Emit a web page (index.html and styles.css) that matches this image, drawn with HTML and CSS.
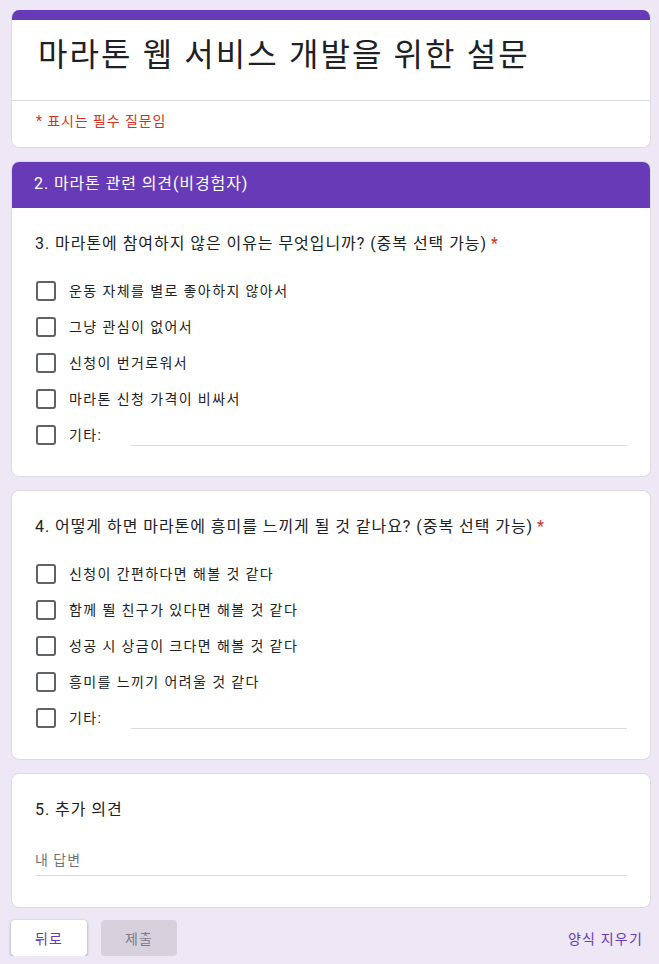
FILE: index.html
```html
<!DOCTYPE html>
<html lang="ko">
<head>
<meta charset="utf-8">
<title>마라톤 웹 서비스 개발을 위한 설문</title>
<link rel="stylesheet" href="styles.css">
</head>
<body>
<main class="form">
  <section class="card title-card">
    <div class="title-top"></div>
    <div class="title-body">
      <h1 class="title">마라톤 웹 서비스 개발을 위한 설문</h1>
    </div>
    <div class="required-note">* 표시는 필수 질문임</div>
  </section>

  <section class="card section-card">
    <div class="section-header">2. 마라톤 관련 의견(비경험자)</div>
    <div class="q-body">
      <div class="question">3. 마라톤에 참여하지 않은 이유는 무엇입니까? (중복 선택 가능)<span class="req">*</span></div>
      <div class="options">
        <label class="option"><span class="box"></span><span class="opt-text">운동 자체를 별로 좋아하지 않아서</span></label>
        <label class="option"><span class="box"></span><span class="opt-text">그냥 관심이 없어서</span></label>
        <label class="option"><span class="box"></span><span class="opt-text">신청이 번거로워서</span></label>
        <label class="option"><span class="box"></span><span class="opt-text">마라톤 신청 가격이 비싸서</span></label>
        <label class="option other"><span class="box"></span><span class="opt-text">기타:</span><span class="other-line"></span></label>
      </div>
    </div>
  </section>

  <section class="card">
    <div class="q-body">
      <div class="question">4. 어떻게 하면 마라톤에 흥미를 느끼게 될 것 같나요? (중복 선택 가능)<span class="req">*</span></div>
      <div class="options">
        <label class="option"><span class="box"></span><span class="opt-text">신청이 간편하다면 해볼 것 같다</span></label>
        <label class="option"><span class="box"></span><span class="opt-text">함께 뛸 친구가 있다면 해볼 것 같다</span></label>
        <label class="option"><span class="box"></span><span class="opt-text">성공 시 상금이 크다면 해볼 것 같다</span></label>
        <label class="option"><span class="box"></span><span class="opt-text">흥미를 느끼기 어려울 것 같다</span></label>
        <label class="option other"><span class="box"></span><span class="opt-text">기타:</span><span class="other-line"></span></label>
      </div>
    </div>
  </section>

  <section class="card">
    <div class="q-body text-q">
      <div class="question">5. 추가 의견</div>
      <div class="answer">내 답변</div>
    </div>
  </section>

  <div class="actions">
    <div class="btns">
      <button class="btn back">뒤로</button>
      <button class="btn submit">제출</button>
    </div>
    <a class="clear">양식 지우기</a>
  </div>
</main>
</body>
</html>
```

FILE: styles.css
```css
* { box-sizing: border-box; }

html, body {
  margin: 0;
  padding: 0;
  background: #ede7f6;
}

body {
  font-family: Roboto, "Noto Sans CJK KR", sans-serif;
  color: #202124;
  padding: 10px 0 0 11px;
}

.form {
  width: 640px;
  display: flex;
  flex-direction: column;
  gap: 13px;
}

.card {
  background: #fff;
  border: 1px solid #dadce0;
  border-radius: 8px;
  overflow: hidden;
}

.title-card {
  border-top: none;
}

.title-top {
  height: 10px;
  background: #673ab7;
  margin: 0 -1px;
}

.title-body {
  padding: 14px 24px 24px 26px;
  border-bottom: 1px solid #dadce0;
}

.title {
  margin: 0;
  font-size: 32px;
  font-weight: 400;
  line-height: 42px;
  letter-spacing: 2.1px;
  color: #202124;
}

.required-note {
  padding: 10px 24px 16px 24px;
  font-size: 14px;
  line-height: 20px;
  letter-spacing: 0.9px;
  color: #d93025;
}

.section-header {
  background: #673ab7;
  color: #fff;
  font-size: 16px;
  line-height: 24px;
  letter-spacing: 0.9px;
  padding: 11px 23px 12px;
  margin: -1px -1px 0;
}

.q-body {
  padding: 24px 23px 23px;
}

.question {
  font-size: 16px;
  line-height: 24px;
  color: #202124;
  letter-spacing: 0.95px;
}

.req {
  color: #d93025;
  margin-left: 4px;
  letter-spacing: 0;
}

.options {
  margin-top: 17px;
  display: flex;
  flex-direction: column;
}

.option {
  height: 36px;
  display: flex;
  align-items: center;
  font-size: 14px;
  color: #202124;
}

.box {
  width: 20px;
  height: 20px;
  border: 2px solid #5f6368;
  border-radius: 3px;
  flex: none;
  margin-left: 1px;
}

.opt-text {
  margin-left: 13px;
  line-height: 20px;
  letter-spacing: 1.4px;
}

.other-line {
  flex: 1;
  align-self: flex-end;
  height: 1px;
  background: #dadce0;
  margin: 0 0 7px 29px;
}

.text-q {
  padding-bottom: 31px;
}

.answer {
  margin-top: 23px;
  height: 31px;
  font-size: 14px;
  line-height: 24px;
  letter-spacing: 1px;
  color: #70757a;
  padding-top: 3px;
  border-bottom: 1px solid #dadce0;
}

.actions {
  display: flex;
  align-items: center;
  justify-content: space-between;
  margin-top: -1px;
}

.btns {
  display: flex;
  gap: 14px;
}

.btn {
  width: 76px;
  height: 36px;
  border: none;
  border-radius: 4px;
  font-family: Roboto, "Noto Sans CJK KR", sans-serif;
  font-size: 14px;
  letter-spacing: 1px;
  padding: 0;
}

.back {
  background: #fff;
  color: #673ab7;
  box-shadow: 0 1px 2px rgba(60, 64, 67, 0.3), 0 1px 3px 1px rgba(60, 64, 67, 0.15);
}

.submit {
  background: #d7d1dd;
  color: #80798a;
}

.clear {
  font-size: 14px;
  letter-spacing: 1.2px;
  color: #673ab7;
  margin-right: 8px;
}
```
